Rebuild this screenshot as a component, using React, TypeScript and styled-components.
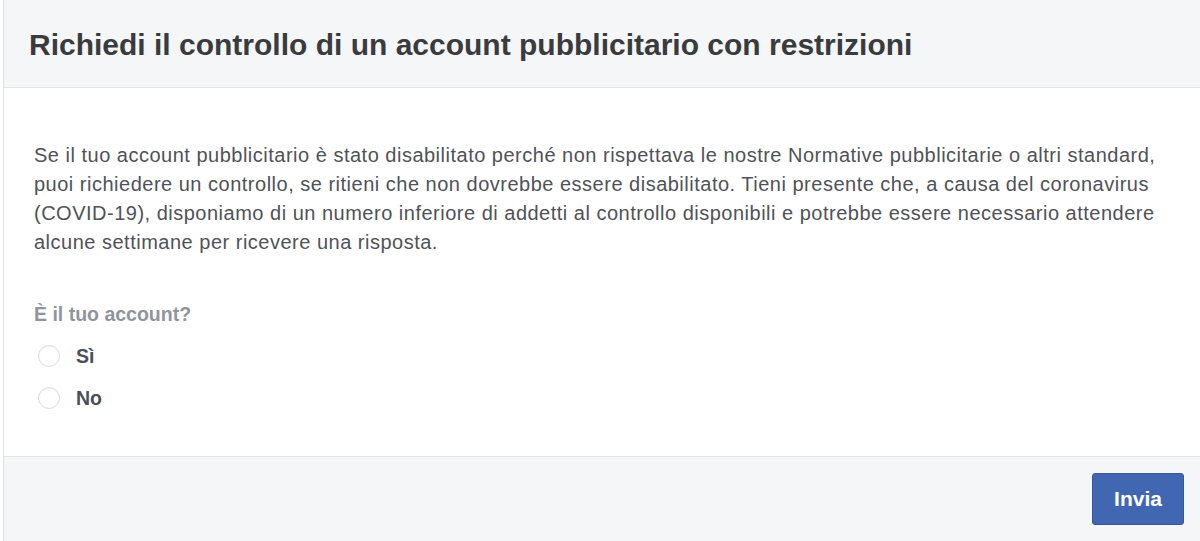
import React, {useState} from "react";
import styled, {createGlobalStyle} from "styled-components";

const GlobalStyle = createGlobalStyle`
  html, body {
    margin: 0;
    padding: 0;
    background: #ffffff;
  }
  body {
    font-family: "Liberation Sans", Arial, Helvetica, sans-serif;
  }
`

const Dialog = styled.div`
  width: calc(100% - 3px);
  height: 541px;
  display: flex;
  flex-direction: column;
  box-sizing: border-box;
  border-left: 1px solid #dddfe2;
  margin-left: 3px;
  background: #ffffff;
  overflow: hidden;
`

const Header = styled.div`
  height: 88px;
  flex: none;
  display: flex;
  align-items: center;
  padding: 2px 25px 0;
  box-sizing: border-box;
  background: #f5f6f7;
  border-bottom: 1px solid #e3e4e6;
`

const Title = styled.h1`
  margin: 0;
  font-size: 30px;
  font-weight: bold;
  color: #3a3b3f;
`

const Body = styled.div`
  flex: 1;
  padding: 53px 30px 0;
  display: flex;
  flex-direction: column;
`

const Description = styled.p`
  margin: 0;
  font-size: 20px;
  letter-spacing: 0.5px;
  line-height: 29px;
  color: #4f5258;
  white-space: nowrap;
`

const Question = styled.div`
  margin-top: 46px;
  font-size: 19.5px;
  line-height: 22px;
  font-weight: bold;
  color: #90949c;
`

const Options = styled.div`
  display: flex;
  flex-direction: column;
  gap: 20px;
  margin-top: 20px;
  padding-left: 4px;
`

const Option = styled.label`
  display: flex;
  align-items: center;
  gap: 16px;
  height: 22px;
  font-size: 19.5px;
  font-weight: bold;
  color: #4b4f56;
  cursor: pointer;
`

const Radio = styled.span<{ $checked: boolean }>`
  width: 22px;
  height: 22px;
  box-sizing: border-box;
  border-radius: 50%;
  border: 1px solid #dadde1;
  background: ${p => p.$checked ? "radial-gradient(circle, #4267b2 0 5px, #ffffff 6px)" : "#ffffff"};
  box-shadow: inset 0 1px 2px rgba(0, 0, 0, 0.05);
`

const Footer = styled.div`
  height: 85px;
  flex: none;
  display: flex;
  align-items: center;
  justify-content: flex-end;
  padding: 0 16px;
  box-sizing: border-box;
  background: #f5f6f7;
  border-top: 1px solid #e3e4e6;
`

const SubmitButton = styled.button`
  width: 92px;
  height: 52px;
  border: 1px solid #365899;
  border-radius: 3px;
  background: #4267b2;
  color: #ffffff;
  font-family: "Liberation Sans", Arial, sans-serif;
  font-size: 21px;
  font-weight: bold;
  cursor: pointer;
`

const App = () => {
    const [answer, setAnswer] = useState<string>("");

    return (
        <>
            <GlobalStyle />
            <Dialog>
                <Header>
                    <Title>Richiedi il controllo di un account pubblicitario con restrizioni</Title>
                </Header>
                <Body>
                    <Description>
                        Se il tuo account pubblicitario è stato disabilitato perché non rispettava le nostre Normative pubblicitarie o altri standard,<br />
                        puoi richiedere un controllo, se ritieni che non dovrebbe essere disabilitato. Tieni presente che, a causa del coronavirus<br />
                        (COVID-19), disponiamo di un numero inferiore di addetti al controllo disponibili e potrebbe essere necessario attendere<br />
                        alcune settimane per ricevere una risposta.
                    </Description>
                    <Question>È il tuo account?</Question>
                    <Options>
                        {["Sì", "No"].map((label) => (
                            <Option key={label} onClick={() => setAnswer(label)}>
                                <Radio $checked={answer === label} />
                                {label}
                            </Option>
                        ))}
                    </Options>
                </Body>
                <Footer>
                    <SubmitButton>Invia</SubmitButton>
                </Footer>
            </Dialog>
        </>
    )
}

export default App;
